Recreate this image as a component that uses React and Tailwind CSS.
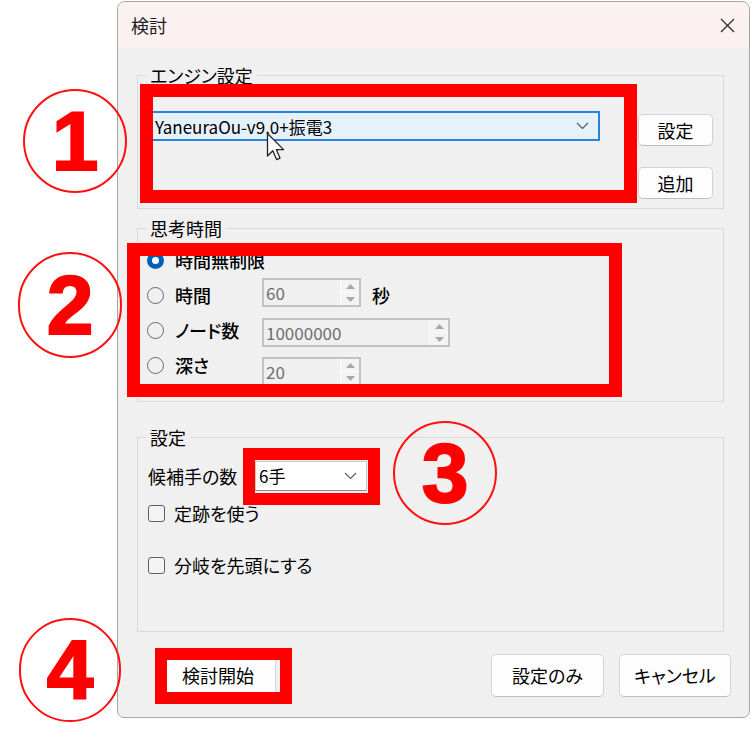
import { useState } from 'react';

const font = "font-['Noto_Sans_CJK_JP','Noto_Sans',sans-serif] [font-feature-settings:'palt']";

const Chevron = () => (
  <svg width="13" height="8" viewBox="0 0 13 8" className="shrink-0">
    <polyline points="1,1 6.5,6.5 12,1" fill="none" stroke="#5a5a5a" strokeWidth="1.2" />
  </svg>
);

const Spinner = () => (
  <div className="flex flex-col w-[19px] h-full border-l border-[#fafafa] bg-[#f3f3f3]">
    <div className="flex-1 flex items-center justify-center border-b border-[#fafafa]">
      <svg width="9" height="5" viewBox="0 0 9 5">
        <polygon points="0,5 4.5,0 9,5" fill="#a8a8a8" />
      </svg>
    </div>
    <div className="flex-1 flex items-center justify-center">
      <svg width="9" height="5" viewBox="0 0 9 5">
        <polygon points="0,0 9,0 4.5,5" fill="#a8a8a8" />
      </svg>
    </div>
  </div>
);

const NumberBox = ({ value, width }) => (
  <div className={`flex items-stretch h-[29px] border-2 border-[#c2c2c2] bg-[#f0f0f0] ${width}`}>
    <span className="flex-1 pl-[2px] text-[17px] leading-[25px] text-[#6e6e6e]">{value}</span>
    <Spinner />
  </div>
);

const Radio = ({ checked }) =>
  checked ? (
    <span className="flex items-center justify-center w-[17px] h-[17px] rounded-full bg-[#005fb8] shrink-0">
      <span className="w-[7px] h-[7px] rounded-full bg-white" />
    </span>
  ) : (
    <span className="w-[17px] h-[17px] rounded-full border-[1.5px] border-[#686868] shrink-0" />
  );

const Check = () => (
  <span className="w-[17px] h-[17px] rounded-[3px] border border-[#5f5f5f] bg-[#f4f4f4] shrink-0" />
);

const WinButton = ({ children, className = '' }) => (
  <button
    className={`h-full flex items-center justify-center rounded-[5px] border border-[#d3d3d3] border-b-[#bdbdbd] bg-[#fdfdfd] text-[18px] text-black ${className}`}
  >
    {children}
  </button>
);

const Group = ({ title, className, children }) => (
  <fieldset className={`ml-[19px] w-[587px] border border-[#d9d9d9] ${className}`}>
    <legend className="ml-[8px] px-[4px] text-[18px] leading-[24px] text-black">{title}</legend>
    {children}
  </fieldset>
);

// label part sits a little off the input's centre, as in the WinForms original
const RadioRow = ({ checked, label, children, className, labelClass = '' }) => (
  <div className={`flex items-start ${className}`}>
    <div className={`flex items-center h-[24px] w-[115px] shrink-0 ${labelClass}`}>
      <Radio checked={checked} />
      <span className="ml-[11px] whitespace-nowrap text-[18px] leading-[24px] font-medium text-black">
        {label}
      </span>
    </div>
    {children}
  </div>
);

const Circled = ({ n, className }) => (
  <div
    className={`absolute flex items-center justify-center rounded-full border-2 border-[#ff1010] ${className}`}
  >
    <span className="font-['Liberation_Sans',sans-serif] font-bold text-[84px] leading-none text-[#ff0000] [-webkit-text-stroke:2px_#ff0000]">
      {n}
    </span>
  </div>
);

export default function App() {
  const [mode] = useState('unlimited');

  return (
    <div className={`relative w-[753px] h-[752px] bg-white overflow-hidden ${font}`}>
      <div className="pl-[117px] pt-px">
        <div className="w-[633px] h-[717px] flex flex-col rounded-t-[8px] rounded-b-[7px] border border-[#a6a6a6] bg-[#f0f0f0] overflow-hidden">
          {/* title bar */}
          <div className="h-[46px] shrink-0 flex items-center justify-between pl-[13px] pr-[14px] bg-[#fbf1f1]">
            <span className="text-[18px] text-[#1b1b1b]">検討</span>
            <svg width="15" height="15" viewBox="0 0 15 15">
              <path d="M1 1 L14 14 M14 1 L1 14" stroke="#333" strokeWidth="1.4" />
            </svg>
          </div>

          {/* engine */}
          <Group title="エンジン設定" className="mt-[15px] h-[146px]">
            <div className="flex items-start px-[10px]">
              <div className="mt-[24px] w-[452px] h-[30px] flex items-center justify-between pl-[5px] pr-[9px] border-2 border-[#2a82da] bg-[#e5f1fb]">
                <span className="text-[17px] leading-none text-black">YaneuraOu-v9.0+振電3</span>
                <Chevron />
              </div>
              <div className="mt-[27px] ml-[38px] flex flex-col gap-[21px]">
                <div className="w-[75px] h-[32px]">
                  <WinButton className="w-full">設定</WinButton>
                </div>
                <div className="w-[75px] h-[32px]">
                  <WinButton className="w-full">追加</WinButton>
                </div>
              </div>
            </div>
          </Group>

          {/* time */}
          <Group title="思考時間" className="mt-[7px] h-[186px]">
            <div className="flex flex-col pl-[9px]">
              <RadioRow checked={mode === 'unlimited'} label="時間無制限" className="mt-[8px] h-[24px]" />
              <RadioRow label="時間" className="mt-[6px] h-[29px]" labelClass="mt-[5px]">
                <NumberBox value="60" width="w-[99px]" />
                <span className="ml-[11px] mt-[4px] text-[18px] font-medium text-black">秒</span>
              </RadioRow>
              <RadioRow label="ノード数" className="mt-[11px] h-[29px]">
                <NumberBox value="10000000" width="w-[188px]" />
              </RadioRow>
              <RadioRow label="深さ" className="mt-[10px] h-[29px]" labelClass="-mt-[4px]">
                <NumberBox value="20" width="w-[99px]" />
              </RadioRow>
            </div>
          </Group>

          {/* settings */}
          <Group title="設定" className="mt-[23px] h-[207px]">
            <div className="flex flex-col pl-[10px]">
              <div className="mt-[12px] h-[30px] flex items-center">
                <span className="w-[107px] text-[18px] text-black">候補手の数</span>
                <div className="w-[112px] h-[30px] flex items-center justify-between pl-[3px] pr-[9px] border border-[#cacaca] border-b-[#8c8c8c] bg-white">
                  <span className="text-[17px] text-black">6手</span>
                  <Chevron />
                </div>
              </div>
              <div className="mt-[10px] h-[24px] flex items-center">
                <Check />
                <span className="ml-[9px] text-[18px] text-black">定跡を使う</span>
              </div>
              <div className="mt-[28px] h-[24px] flex items-center">
                <Check />
                <span className="ml-[9px] text-[18px] text-black">分岐を先頭にする</span>
              </div>
            </div>
          </Group>

          {/* buttons */}
          <div className="mt-[22px] h-[43px] flex pl-[42px] pr-[18px]">
            <WinButton className="w-[116px] border-[#0067c0] border-b-[#0067c0]">検討開始</WinButton>
            <div className="ml-auto flex gap-[15px] h-full">
              <WinButton className="w-[113px]">設定のみ</WinButton>
              <WinButton className="w-[112px]">キャンセル</WinButton>
            </div>
          </div>
        </div>
      </div>

      {/* annotations */}
      <div className="absolute left-[140px] top-[84px] w-[497px] h-[119px] border-[13px] border-[#ff0000]" />
      <div className="absolute left-[127px] top-[243px] w-[495px] h-[154px] border-[13px] border-[#ff0000]" />
      <div className="absolute left-[243px] top-[448px] w-[137px] h-[57px] border-[12px] border-[#ff0000]" />
      <div className="absolute left-[155px] top-[648px] w-[137px] h-[56px] border-[12px] border-[#ff0000]" />

      <Circled n="1" className="left-[23px] top-[89px] w-[104px] h-[104px]" />
      <Circled n="2" className="left-[18px] top-[252px] w-[104px] h-[106px]" />
      <Circled n="3" className="left-[393px] top-[421px] w-[104px] h-[104px]" />
      <Circled n="4" className="left-[19px] top-[618px] w-[102px] h-[104px]" />

      {/* mouse cursor */}
      <svg className="absolute left-[266px] top-[132px]" width="20" height="30" viewBox="0 0 20 30">
        <path
          d="M1.5 1.5 V24 L6.8 18.8 L10.6 27.6 L14 26.1 L10.3 17.6 H17.6 Z"
          fill="white"
          stroke="#222"
          strokeWidth="1.3"
          strokeLinejoin="round"
        />
      </svg>
    </div>
  );
}
